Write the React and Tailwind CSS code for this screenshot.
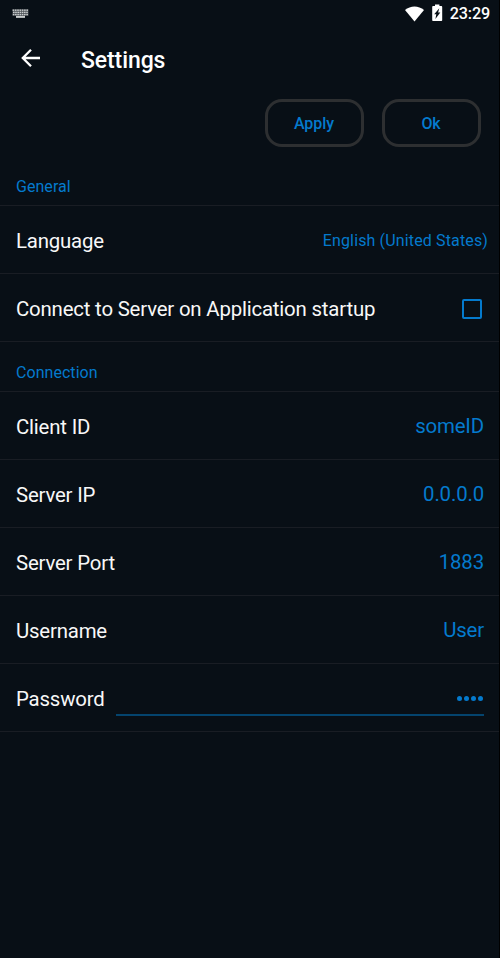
const sections = {
  connection: [
    ['Client ID', 'someID'],
    ['Server IP', '0.0.0.0'],
    ['Server Port', '1883'],
    ['Username', 'User'],
  ],
};

function StatusBar() {
  return (
    <div className="flex h-7 items-center pl-3 pr-[9px]">
      <svg width="17" height="10" viewBox="0 0 17 10">
        <path fill="#4b5156" d="M0.5 0.2h16v6.5h-3.5v2.4H4V6.7H0.5z" />
        <g fill="#c9cccd">
          {[0, 1, 2, 3, 4, 5, 6].map((i) => (
            <g key={i}>
              <rect x={0.6 + i * 2.3} y="0.5" width="1.6" height="1.4" />
              <rect x={1 + i * 2.2} y="2.7" width="1.6" height="1.4" />
              <rect x={0.8 + i * 2.25} y="4.9" width="1.6" height="1.4" />
            </g>
          ))}
          <rect x="4" y="7" width="9" height="1.8" />
        </g>
      </svg>
      <svg className="-mt-[1px] ml-auto" width="20" height="16" viewBox="0 0 20 16" fill="#fff">
        <path d="M0 3.9C5.5-0.8 13.5-0.8 19 3.9L9.5 15.4Z" />
      </svg>
      <svg className="-mt-[3px] ml-[7px]" width="11" height="18" viewBox="0 0 11 18">
        <path fill="#fff" d="M3 0.5h4.4v1.6h2q0.8 0 0.8 0.8v13.3q0 0.8-0.8 0.8H1q-0.8 0-0.8-0.8V2.9q0-0.8 0.8-0.8h2z" />
        <path fill="#080f16" d="M7.3 4.2L6.1 8.4h2.2L3.4 15l0.9-4.8H2.2z" />
      </svg>
      <span className="ml-[7px] text-[16.2px] leading-7 font-medium tracking-[-0.15px] text-white">23:29</span>
    </div>
  );
}

function Row({ label, children }) {
  return (
    <div className="flex h-[68px] items-center border-b border-[#191d24] pl-4 pr-[15px] pt-[3px]">
      <span className="text-[20.4px] leading-6 tracking-[-0.19px] whitespace-nowrap text-[#f8f8f8]">{label}</span>
      {children}
    </div>
  );
}

function SectionTitle({ children }) {
  return <h2 className="text-[16px] leading-5 tracking-[0.05px] text-[#047acd]">{children}</h2>;
}

export default function App() {
  return (
    <div className="h-[958px] w-[500px] overflow-hidden border-r border-black bg-[#080f16] font-['Roboto',sans-serif]">
      <StatusBar />
      <header className="flex h-[62px] items-center pl-[21px]">
        <svg className="-mt-[3px]" width="20" height="20" viewBox="0 0 20 20" fill="none" stroke="#fff" strokeWidth="2.3">
          <path d="M19 10H2M10 1.8L1.8 10L10 18.2" />
        </svg>
        <h1 className="ml-10 pt-[3px] text-[23px] leading-7 font-medium tracking-[-0.1px] text-white">Settings</h1>
      </header>
      <div className="flex justify-end gap-[18px] pt-[9px] pr-[18px]">
        <button className="h-12 w-[99px] rounded-[17px] border-[3px] border-[#2d2f31] pt-[2px] pr-[1px] text-[16px] font-medium tracking-[-0.05px] text-[#047acd]">Apply</button>
        <button className="h-12 w-[99px] rounded-[17px] border-[3px] border-[#2d2f31] pt-[2px] pr-[1px] text-[16px] font-medium tracking-[-0.1px] text-[#047acd]">Ok</button>
      </div>
      <div className="h-[59px] border-b border-[#191d24] pt-[30px] pl-4">
        <SectionTitle>General</SectionTitle>
      </div>
      <Row label="Language">
        <span className="-mr-[4px] ml-auto text-[16px] tracking-[0.14px] text-[#047acd]">English (United States)</span>
      </Row>
      <Row label="Connect to Server on Application startup">
        <span className="mr-[2px] ml-auto size-[20px] rounded-[2px] border-2 border-[#047acd]" />
      </Row>
      <div className="h-[50px] border-b border-[#191d24] pt-[21px] pl-4">
        <SectionTitle>Connection</SectionTitle>
      </div>
      {sections.connection.map(([label, value]) => (
        <Row key={label} label={label}>
          <span className="ml-auto pb-[2px] text-[20.4px] leading-6 tracking-[-0.15px] text-[#047acd]">{value}</span>
        </Row>
      ))}
      <Row label="Password">
        <span className="-mt-[1px] ml-[11px] flex h-[34px] flex-1 items-center justify-end gap-[2px] border-b-2 border-[#04446e] pr-[1px] pt-[1px]">
          {[0, 1, 2, 3].map((dot) => (
            <span key={dot} className="size-[5px] rounded-full bg-[#047acd]" />
          ))}
        </span>
      </Row>
    </div>
  );
}
